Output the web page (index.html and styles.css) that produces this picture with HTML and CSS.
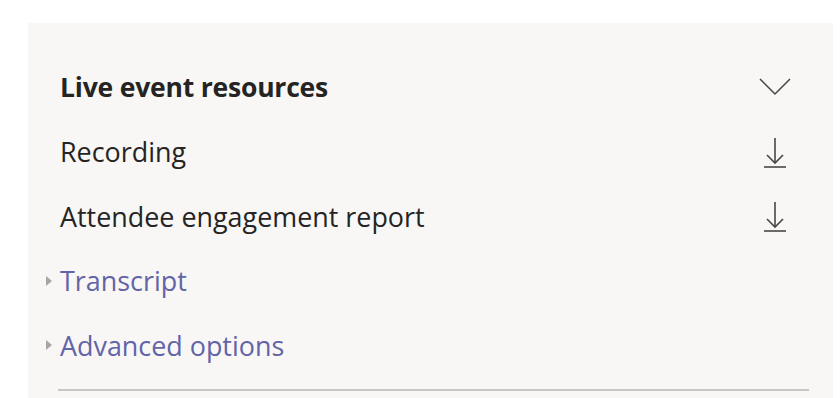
FILE: index.html
```html
<!DOCTYPE html>
<html lang="en">
<head>
    <meta charset="UTF-8">
    <title>Live event resources</title>
    <link rel="stylesheet" href="styles.css">
</head>
<body>

<div class="panel">
    <div class="row">
        <div class="title">Live event resources</div>
        <svg class="icon" width="32" height="18" viewBox="0 0 32 18">
            <polyline points="1,1 16,16 31,1" fill="none" stroke="#484644" stroke-width="1.5"/>
        </svg>
    </div>
    <div class="row">
        <div class="item">Recording</div>
        <svg class="icon" width="32" height="32" viewBox="0 0 32 32">
            <line x1="16" y1="2" x2="16" y2="27" stroke="#484644" stroke-width="1.6"/>
            <polyline points="8,19 16,27 24,19" fill="none" stroke="#484644" stroke-width="1.6"/>
            <line x1="5" y1="31" x2="27" y2="31" stroke="#484644" stroke-width="1.6"/>
        </svg>
    </div>
    <div class="row">
        <div class="item">Attendee engagement report</div>
        <svg class="icon" width="32" height="32" viewBox="0 0 32 32">
            <line x1="16" y1="2" x2="16" y2="27" stroke="#484644" stroke-width="1.6"/>
            <polyline points="8,19 16,27 24,19" fill="none" stroke="#484644" stroke-width="1.6"/>
            <line x1="5" y1="31" x2="27" y2="31" stroke="#484644" stroke-width="1.6"/>
        </svg>
    </div>
    <div class="row">
        <div class="link"><span class="caret"></span>Transcript</div>
    </div>
    <div class="row">
        <div class="link"><span class="caret"></span>Advanced options</div>
    </div>
    <hr class="divider">
</div>

</body>
</html>
```

FILE: styles.css
```css
body {
    margin: 0;
    background: #ffffff;
    font-family: "Open Sans", "Noto Sans", sans-serif;
    color: #252423;
    overflow: hidden;
}
.panel {
    margin: 23px 7px 0 28px;
    height: 343px;
    padding: 32px 43px 0 32px;
    background: #f8f7f6;
}
.row {
    display: flex;
    align-items: center;
    justify-content: space-between;
    height: 64.5px;
}
.title {
    font-size: 26.5px;
    font-weight: 700;
    letter-spacing: -0.2px;
}
.item {
    font-size: 26.9px;
}
.link {
    position: relative;
    font-size: 26.9px;
    color: #6264a7;
}
.caret {
    position: absolute;
    left: -14px;
    top: 50%;
    margin-top: -5px;
    border-left: 6px solid #a8a6a4;
    border-top: 5px solid transparent;
    border-bottom: 5px solid transparent;
}
.icon {
    display: block;
    margin-right: -1px;
}
.divider {
    margin: 11px -19px 0 -2px;
    border: 0;
    border-top: 2px solid #c8c6c4;
}
```
